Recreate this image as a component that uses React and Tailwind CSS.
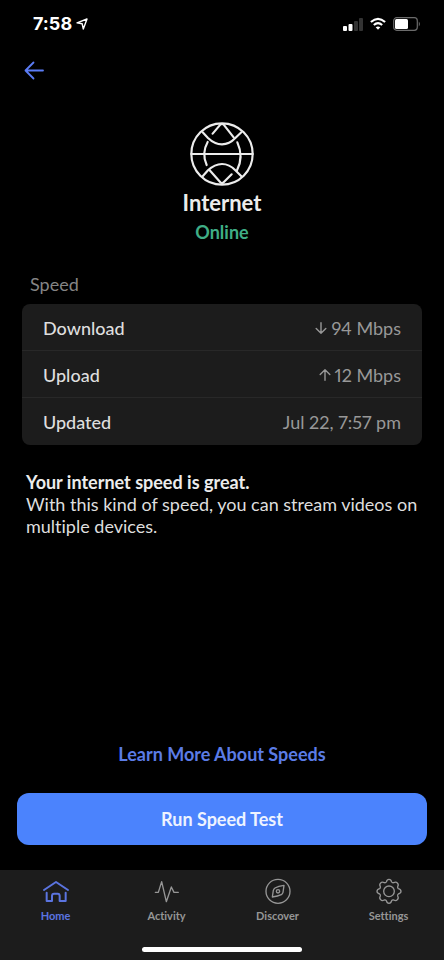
import { useState } from "react";

const stats = [
  { label: "Download", value: "94 Mbps", direction: "down" },
  { label: "Upload", value: "12 Mbps", direction: "up" },
  { label: "Updated", value: "Jul 22, 7:57 pm" },
];

const tabs = [
  { id: "home", label: "Home", Icon: HomeIcon },
  { id: "activity", label: "Activity", Icon: ActivityIcon },
  { id: "discover", label: "Discover", Icon: DiscoverIcon },
  { id: "settings", label: "Settings", Icon: SettingsIcon },
];

function HomeIcon() {
  return (
    <svg className="h-7 w-7" viewBox="0 0 84 84" fill="none" stroke="currentColor" strokeWidth="6" strokeLinecap="round" strokeLinejoin="round">
      <path d="M6 36 L42 12 L78 36" />
      <path d="M14 44 V69 H30 V54 Q30 47 36 47 H47 Q53 47 53 54 V69 H71 V44" />
    </svg>
  );
}

function ActivityIcon() {
  return (
    <svg className="h-7 w-7" viewBox="0 0 84 84" fill="none" stroke="currentColor" strokeWidth="4" strokeLinecap="round" strokeLinejoin="round">
      <path d="M7 43 H16 L26 11 L40 71 L55 27 L63 43 H76" />
    </svg>
  );
}

function DiscoverIcon() {
  return (
    <svg className="h-7 w-7" viewBox="0 3 84 84" fill="none" stroke="currentColor" strokeWidth="4" strokeLinecap="round" strokeLinejoin="round">
      <circle cx="42" cy="43" r="36" />
      <path d="M60 25 L57 46 Q56 50 52 53 Q42 58 25 60 L28 40 Q29 36 33 33 Q43 27 60 25 Z" />
      <circle cx="42" cy="43" r="5" />
    </svg>
  );
}

function SettingsIcon() {
  return (
    <svg className="h-7 w-7" viewBox="0 3 84 84" fill="none" stroke="currentColor" strokeWidth="4" strokeLinecap="round" strokeLinejoin="round">
      <path d="M34 15 Q36 7 42 7 Q48 7 50 15 Q52 18 56 17 Q63 13 67 18 Q72 22 68 29 Q67 33 70 35 Q78 37 78 43 Q78 49 70 51 Q67 53 68 57 Q72 64 67 68 Q63 73 56 69 Q52 68 50 71 Q48 79 42 79 Q36 79 34 71 Q32 68 28 69 Q21 73 17 68 Q12 64 16 57 Q17 53 14 51 Q6 49 6 43 Q6 37 14 35 Q17 33 16 29 Q12 22 17 18 Q21 13 28 17 Q32 18 34 15 Z" />
      <circle cx="42" cy="43" r="16" />
    </svg>
  );
}

function GlobeIcon() {
  return (
    <svg className="h-16 w-16" viewBox="84 36 192 192" fill="none" stroke="currentColor" strokeWidth="6.5" strokeLinecap="round" strokeLinejoin="round">
      <circle cx="180" cy="132" r="92" />
      <path d="M88 132 H272" />
      <path d="M122 67 L138 84 Q158 103 180 103 Q202 103 220 84 L238 67" />
      <path d="M122 199 L138 181 Q158 162 180 162 Q202 162 220 181 L238 199" />
      <path d="M152 71 L175 44 Q180 40 185 44 L215 82" />
      <path d="M143 181 L175 217 Q180 222 185 217 L209 193" />
      <path d="M137 96 Q118 130 134 165" />
      <path d="M226 97 Q246 140 225 181" />
    </svg>
  );
}

function SpeedArrow({ direction }) {
  return (
    <svg className="h-3 w-3" viewBox="0 0 12 12" fill="none" stroke="currentColor" strokeWidth="1.4" strokeLinecap="round" strokeLinejoin="round">
      {direction === "down" ? (
        <path d="M6 0.7 V11.2 M1.2 6.6 L6 11.2 L10.8 6.6" />
      ) : (
        <path d="M6 11.3 V0.8 M1.2 5.4 L6 0.8 L10.8 5.4" />
      )}
    </svg>
  );
}

function StatusBar() {
  return (
    <div className="flex h-12 items-center justify-between pr-[23px] pl-[33px] text-white">
      <div className="flex items-center gap-1">
        <span className="text-lg font-bold">7:58</span>
        <svg className="h-3 w-3" viewBox="0 0 12 12" fill="none" stroke="currentColor" strokeWidth="1.4" strokeLinejoin="round">
          <path d="M11 1 L7.3 11 L6.2 5.8 L1 4.9 Z" />
        </svg>
      </div>
      <div className="flex items-center gap-[7px]">
        <svg className="h-3.5 w-5" viewBox="0 0 20 14" fill="currentColor">
          <rect x="0" y="9" width="4" height="5" rx="1" />
          <rect x="5.5" y="7" width="4" height="7" rx="1" />
          <rect x="11" y="4" width="4" height="10" rx="1" fill="#333333" />
          <rect x="16" y="1" width="4" height="13" rx="1" fill="#333333" />
        </svg>
        <svg className="h-3.5 w-4" viewBox="0 0 18 14" fill="none" stroke="currentColor" strokeWidth="2.4">
          <path d="M1 4.8 Q9 -2.4 17 4.8" />
          <path d="M4.3 8.2 Q9 4 13.7 8.2" />
          <path d="M9 13.4 L6.4 10.7 Q9 8.8 11.6 10.7 Z" fill="currentColor" stroke="none" />
        </svg>
        <svg className="h-3.5 w-7" viewBox="0 0 28 14" fill="none">
          <rect x="0.7" y="0.7" width="23.6" height="12.6" rx="3" stroke="#6b6b6b" strokeWidth="1.2" />
          <rect x="2" y="2" width="13" height="10" rx="1.5" fill="#ffffff" />
          <path d="M25.8 4.5 Q28 7 25.8 9.5 Z" fill="#6b6b6b" />
        </svg>
      </div>
    </div>
  );
}

export default function App() {
  const [activeTab, setActiveTab] = useState("home");

  return (
    <div className="flex min-h-screen flex-col bg-black font-['Lato',sans-serif] text-[#dedede] [font-variant-ligatures:none]">
      <div className="font-['Inter',sans-serif]">
        <StatusBar />
      </div>

      <header className="flex px-6 pt-3">
        <button type="button" aria-label="Back" className="text-[#5b7cf5]">
          <svg className="h-5 w-5" viewBox="0 0 20 20" fill="none" stroke="currentColor" strokeWidth="1.8" strokeLinecap="round" strokeLinejoin="round">
            <path d="M19 10.5 H1.5 M9.5 2.5 L1.5 10.5 L9.5 18.5" />
          </svg>
        </button>
      </header>

      <main className="flex flex-1 flex-col px-[17px]">
        <section className="flex flex-col items-center pt-[42px]">
          <span className="text-[#ececec]">
            <GlobeIcon />
          </span>
          <h1 className="mt-[3px] text-[22px] leading-7 font-bold text-[#ececec]">Internet</h1>
          <p className="mt-[3px] text-lg leading-6 font-bold text-[#3fae86]">Online</p>
        </section>

        <section className="mt-7">
          <h2 className="px-[13px] text-lg leading-6 text-[#858585]">Speed</h2>
          <dl className="mx-[5px] mt-2 divide-y divide-[#282828] rounded-lg bg-[#1c1c1c] text-lg">
            {stats.map((stat) => (
              <div key={stat.label} className="flex h-[47px] items-center justify-between px-[21px] pt-px">
                <dt className="font-medium">{stat.label}</dt>
                <dd className="flex items-center gap-1 text-[#989898] proportional-nums">
                  {stat.direction && <SpeedArrow direction={stat.direction} />}
                  {stat.value}
                </dd>
              </div>
            ))}
          </dl>
        </section>

        <section className="mt-[26px] px-[9px] text-lg leading-[22px]">
          <p className="font-bold text-[#ececec]">Your internet speed is great.</p>
          <p>With this kind of speed, you can stream videos on multiple devices.</p>
        </section>

        <div className="mt-auto flex flex-col pb-[25px]">
          <a href="#speeds" className="self-center text-lg leading-6 font-bold text-[#5b7ce6]">
            Learn More About Speeds
          </a>
          <button type="button" className="mt-[27px] h-13 rounded-xl bg-[#4b83fd] text-lg font-bold text-[#eef3ff]">
            Run Speed Test
          </button>
        </div>
      </main>

      <nav className="bg-[#1c1c1c] pt-2">
        <div className="grid grid-cols-4">
          {tabs.map(({ id, label, Icon }) => (
            <button
              key={id}
              type="button"
              onClick={() => setActiveTab(id)}
              className={`flex flex-col items-center gap-0.5 text-[11px] leading-4 font-bold ${
                activeTab === id ? "text-[#5b74e0]" : "text-[#969696]"
              }`}
            >
              <Icon />
              {label}
            </button>
          ))}
        </div>
        <div className="mx-auto mt-[23px] mb-2 h-[5px] w-40 rounded-full bg-white" />
      </nav>
    </div>
  );
}
